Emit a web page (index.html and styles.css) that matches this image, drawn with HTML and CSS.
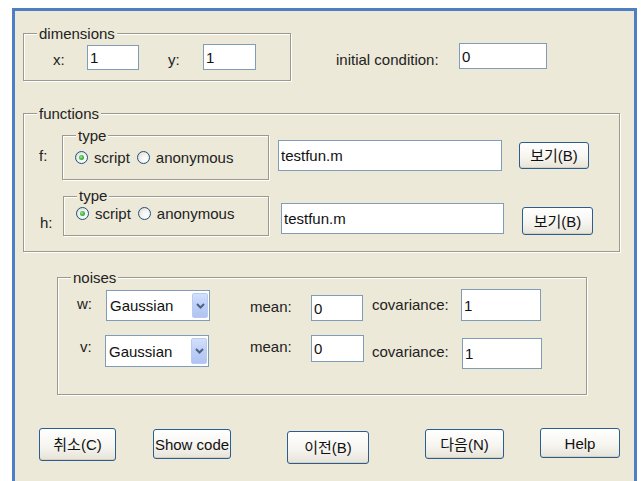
FILE: index.html
```html
<!DOCTYPE html>
<html lang="ko">
<head>
<meta charset="utf-8">
<title>Model setup</title>
<link rel="stylesheet" href="styles.css">
</head>
<body>
<div class="window">

  <div class="top-row">
    <div class="group dims">
      <span class="cap">dimensions</span>
      <span class="lbl lbl-x">x:</span>
      <input class="field f-x" type="text" value="1">
      <span class="lbl lbl-y">y:</span>
      <input class="field f-y" type="text" value="1">
    </div>
    <div class="init">
      <span class="lbl lbl-init">initial condition:</span>
      <input class="field f-init" type="text" value="0">
    </div>
  </div>

  <div class="group functions">
    <span class="cap">functions</span>

    <div class="fn-row fn-f">
      <span class="lbl fn-lbl">f:</span>
      <div class="group type type-f">
        <span class="cap">type</span>
        <div class="radios">
          <span class="radio on"></span><span class="r-text">script</span>
          <span class="radio"></span><span class="r-text">anonymous</span>
        </div>
      </div>
      <input class="field fn-file" type="text" value="testfun.m">
      <button class="btn fn-btn" type="button">보기(B)</button>
    </div>

    <div class="fn-row fn-h">
      <span class="lbl fn-lbl">h:</span>
      <div class="group type type-h">
        <span class="cap">type</span>
        <div class="radios">
          <span class="radio on"></span><span class="r-text">script</span>
          <span class="radio"></span><span class="r-text">anonymous</span>
        </div>
      </div>
      <input class="field fn-file" type="text" value="testfun.m">
      <button class="btn fn-btn" type="button">보기(B)</button>
    </div>
  </div>

  <div class="group noises">
    <span class="cap">noises</span>

    <div class="noise-row nz-w">
      <span class="lbl nz-lbl">w:</span>
      <div class="combo">
        <span class="combo-text">Gaussian</span>
        <span class="combo-drop"><svg width="9" height="6" viewBox="0 0 9 6"><path d="M1 1 L4.5 4.5 L8 1" fill="none" stroke="#4d6185" stroke-width="2"/></svg></span>
      </div>
      <span class="lbl nz-mean">mean:</span>
      <input class="field nz-mean-in" type="text" value="0">
      <span class="lbl nz-cov">covariance:</span>
      <input class="field nz-cov-in" type="text" value="1">
    </div>

    <div class="noise-row nz-v">
      <span class="lbl nz-lbl">v:</span>
      <div class="combo">
        <span class="combo-text">Gaussian</span>
        <span class="combo-drop"><svg width="9" height="6" viewBox="0 0 9 6"><path d="M1 1 L4.5 4.5 L8 1" fill="none" stroke="#4d6185" stroke-width="2"/></svg></span>
      </div>
      <span class="lbl nz-mean">mean:</span>
      <input class="field nz-mean-in" type="text" value="0">
      <span class="lbl nz-cov">covariance:</span>
      <input class="field nz-cov-in" type="text" value="1">
    </div>
  </div>

  <div class="actions">
    <button class="btn b-cancel" type="button">취소(C)</button>
    <button class="btn b-code" type="button">Show code</button>
    <button class="btn b-prev" type="button">이전(B)</button>
    <button class="btn b-next" type="button">다음(N)</button>
    <button class="btn b-help" type="button">Help</button>
  </div>

</div>
</body>
</html>
```

FILE: styles.css
```css
* {
  box-sizing: border-box;
}

html, body {
  margin: 0;
  padding: 0;
  background: #ffffff;
  overflow: hidden;
}

body {
  font-family: "Liberation Sans", "Noto Sans CJK KR", Arial, sans-serif;
  font-size: 15px;
  line-height: 17px;
  color: #222222;
}

/* dialog frame */
.window {
  margin: 8px 0 0 12px;
  width: 625px;
  height: 480px;
  border: 3px solid #4d7fc2;
  border-bottom: none;
  background: #ece9d8;
}

/* etched group box with caption on the top edge */
.group {
  position: relative;
  border: 1px solid #9c9a8f;
  box-shadow: inset 1px 1px 0 #ffffff, 1px 1px 0 #ffffff;
}

.group > .cap {
  position: absolute;
  top: -9px;
  left: 13px;
  padding: 0 2px;
  background: #ece9d8;
  line-height: 17px;
  white-space: nowrap;
}

.lbl {
  display: block;
  white-space: nowrap;
  flex: none;
}

.field {
  display: block;
  flex: none;
  margin: 0;
  padding: 0 2px;
  border: 1px solid #7f9db9;
  background: #ffffff;
  font: inherit;
  color: #111111;
  outline: none;
}

/* top row */
.top-row {
  display: flex;
  align-items: flex-start;
  padding: 22px 0 0 8px;
}

.dims {
  display: flex;
  align-items: flex-start;
  width: 268px;
  height: 48px;
  flex: none;
}

.lbl-x {
  margin: 17px 0 0 29px;
  width: 34px;
}

.f-x {
  margin-top: 11px;
  width: 52px;
  height: 25px;
}

.lbl-y {
  margin: 17px 0 0 29px;
  width: 35px;
}

.f-y {
  margin-top: 10px;
  width: 53px;
  height: 26px;
}

.init {
  display: flex;
  align-items: flex-start;
  margin-left: 45px;
}

.lbl-init {
  margin-top: 18px;
  width: 123px;
}

.f-init {
  margin-top: 10px;
  width: 88px;
  height: 26px;
}

/* functions */
.functions {
  margin: 32px 0 0 8px;
  width: 597px;
  height: 139px;
  padding-top: 21px;
}

.fn-row {
  display: flex;
  align-items: flex-start;
}

.fn-lbl {
  width: 23px;
}

.fn-f .fn-lbl {
  margin: 12px 0 0 15px;
}

.fn-h {
  margin-top: 16px;
}

.fn-h .fn-lbl {
  margin: 18px 0 0 16px;
}

.type {
  flex: none;
}

.type-f {
  width: 207px;
  height: 45px;
}

.type-h {
  width: 206px;
  height: 40px;
}

.type-h > .cap {
  top: -10px;
}

.radios {
  display: flex;
  align-items: center;
  margin-left: 12px;
}

.type-f .radios {
  margin-top: 13px;
}

.type-h .radios {
  margin-top: 8px;
}

.radio {
  display: block;
  flex: none;
  width: 13px;
  height: 13px;
  border: 1px solid #1c5180;
  border-radius: 50%;
  background: radial-gradient(circle at 65% 65%, #ffffff 0%, #f3f2ee 45%, #d4d2c8 100%);
  position: relative;
}

.radio.on::after {
  content: "";
  position: absolute;
  left: 3px;
  top: 3px;
  width: 5px;
  height: 5px;
  border-radius: 50%;
  background: radial-gradient(circle at 40% 40%, #9be89b 0%, #3fb83f 50%, #1f931f 100%);
}

.r-text {
  margin: 0 7px 0 6px;
  white-space: nowrap;
}

.fn-file {
  height: 31px;
}

.fn-f .fn-file {
  margin: 5px 0 0 9px;
  width: 224px;
}

.fn-h .fn-file {
  margin: 7px 0 0 12px;
  width: 223px;
}

/* push buttons */
.btn {
  display: block;
  flex: none;
  margin: 0;
  padding: 0;
  border: 1px solid #2c5d8f;
  border-radius: 3px;
  background: linear-gradient(#ffffff 0%, #f6f5f0 55%, #e6e3d8 100%);
  box-shadow: inset 0 -1px 0 #d6d0c0;
  font: inherit;
  color: #111111;
  text-align: center;
  white-space: nowrap;
}

.fn-f .fn-btn {
  margin: 7px 0 0 17px;
  width: 70px;
  height: 27px;
}

.fn-h .fn-btn {
  margin: 11px 0 0 18px;
  width: 71px;
  height: 28px;
}

/* noises */
.noises {
  margin: 25px 0 0 42px;
  width: 530px;
  height: 118px;
  padding-top: 11px;
}

.noise-row {
  display: flex;
  align-items: flex-start;
}

.nz-v {
  margin-top: 14px;
}

.nz-w .nz-lbl {
  margin: 6px 0 0 19px;
  width: 29px;
}

.nz-v .nz-lbl {
  margin: 3px 0 0 22px;
  width: 25px;
}

.combo {
  display: flex;
  align-items: center;
  flex: none;
  width: 104px;
  height: 31px;
  border: 1px solid #7f9db9;
  background: #ffffff;
  padding: 2px 1px 2px 3px;
}

.nz-w .combo {
  margin-top: 1px;
}

.nz-v .combo {
  height: 32px;
}

.combo-text {
  flex: 1;
  color: #111111;
}

.combo-drop {
  display: flex;
  align-items: center;
  justify-content: center;
  width: 16px;
  height: 100%;
  border-radius: 2px;
  background: linear-gradient(#d3e0fb 0%, #bccff7 50%, #b0c4f2 100%);
  border: 1px solid #b9cbf3;
}

.nz-mean {
  width: 61px;
}

.nz-w .nz-mean {
  margin: 9px 0 0 40px;
}

.nz-v .nz-mean {
  margin: 3px 0 0 41px;
}

.nz-mean-in {
  width: 52px;
}

.nz-w .nz-mean-in {
  margin-top: 6px;
  height: 26px;
}

.nz-v .nz-mean-in {
  width: 53px;
  height: 27px;
}

.nz-cov {
  margin-left: 9px;
  width: 89px;
}

.nz-w .nz-cov {
  margin-top: 7px;
}

.nz-v .nz-cov {
  margin: 8px 0 0 8px;
  width: 90px;
}

.nz-cov-in {
  width: 80px;
}

.nz-w .nz-cov-in {
  height: 32px;
}

.nz-v .nz-cov-in {
  margin-top: 3px;
  height: 31px;
}

/* bottom action buttons */
.actions {
  display: flex;
  align-items: flex-start;
  margin-top: 33px;
}

.b-cancel {
  margin-left: 24px;
  width: 77px;
  height: 33px;
}

.b-code {
  margin: 1px 0 0 37px;
  width: 78px;
  height: 30px;
}

.b-prev {
  margin: 3px 0 0 56px;
  width: 82px;
  height: 33px;
}

.b-next {
  margin: 1px 0 0 56px;
  width: 79px;
  height: 30px;
}

.b-help {
  margin-left: 36px;
  width: 80px;
  height: 30px;
}
```
